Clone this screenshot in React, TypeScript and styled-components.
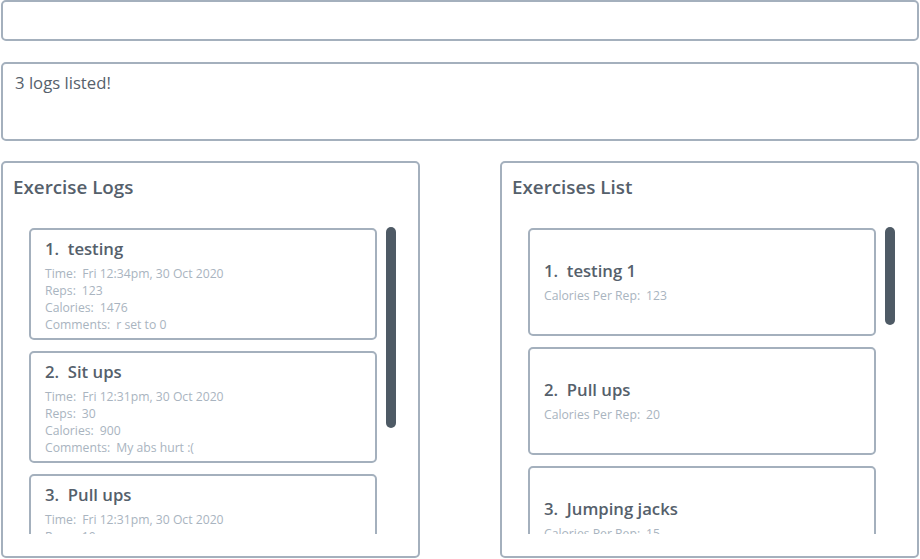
import React from 'react';
import styled, { createGlobalStyle } from 'styled-components';

const GlobalStyle = createGlobalStyle`
  html, body {
    margin: 0;
    padding: 0;
    background: #ffffff;
  }
  body {
    font-family: "Open Sans", "Noto Sans", "Liberation Sans", sans-serif;
  }
`;

const BORDER = '#a4b0bd';

const Page = styled.div`
  width: 920px;
  height: 559px;
  box-sizing: border-box;
  padding: 0 1px;
  display: flex;
  flex-direction: column;
  overflow: hidden;
`;

const CommandBox = styled.div`
  height: 41px;
  box-sizing: border-box;
  border: 2px solid ${BORDER};
  border-radius: 5px;
`;

const ResultBox = styled.div`
  margin-top: 21px;
  height: 79px;
  box-sizing: border-box;
  border: 2px solid ${BORDER};
  border-radius: 5px;
  padding: 7px 12px;
  font-size: 16.7px;
  color: #56616c;
`;

const Panels = styled.div`
  margin-top: 20px;
  display: grid;
  grid-template-columns: 419px 419px;
  justify-content: space-between;
`;

const Panel = styled.section`
  height: 397px;
  box-sizing: border-box;
  border: 2px solid ${BORDER};
  border-radius: 5px;
  padding: 11px 0 0 10px;
  display: flex;
  flex-direction: column;
`;

const PanelTitle = styled.h2`
  margin: 0;
  font-size: 18.8px;
  font-weight: 600;
  color: #55606b;
  line-height: 26px;
`;

const ListArea = styled.div`
  margin-top: 27px;
  margin-left: 16px;
  display: flex;
  gap: 9px;
  align-items: flex-start;
`;

const Viewport = styled.div`
  width: 348px;
  height: 307px;
  padding-top: 1px;
  box-sizing: border-box;
  overflow: hidden;
  display: flex;
  flex-direction: column;
  gap: 11px;
`;

const Thumb = styled.div<{ $height: number }>`
  width: 10px;
  height: ${p => p.$height}px;
  border-radius: 5px;
  background: #4e5a65;
  flex-shrink: 0;
`;

const Card = styled.div<{ $centered?: boolean }>`
  flex-shrink: 0;
  box-sizing: border-box;
  border: 2px solid ${BORDER};
  border-radius: 5px;
  height: ${p => (p.$centered ? 108 : 112)}px;
  padding: ${p => (p.$centered ? '0 14px 2px' : '7px 14px 0')};
  display: flex;
  flex-direction: column;
  justify-content: ${p => (p.$centered ? 'center' : 'flex-start')};
`;

const CardTitle = styled.div`
  font-size: 16.7px;
  font-weight: 600;
  color: #55606b;
  line-height: 24px;
  white-space: pre;
  margin-bottom: 4px;
`;

const Detail = styled.div`
  font-size: 12.2px;
  line-height: 17px;
  color: #a9b4c0;
  white-space: pre;
`;

const Label = styled.span`
  margin-right: 6px;
`;

type Log = { name: string; time: string; reps: number; calories: number; comments: string };

const logs: Log[] = [
  { name: 'testing', time: 'Fri 12:34pm, 30 Oct 2020', reps: 123, calories: 1476, comments: 'r set to 0' },
  { name: 'Sit ups', time: 'Fri 12:31pm, 30 Oct 2020', reps: 30, calories: 900, comments: 'My abs hurt :(' },
  { name: 'Pull ups', time: 'Fri 12:31pm, 30 Oct 2020', reps: 10, calories: 200, comments: 'Tired' },
];

const exercises = [
  { name: 'testing 1', calories: 123 },
  { name: 'Pull ups', calories: 20 },
  { name: 'Jumping jacks', calories: 15 },
];

const Field = ({ label, value }: { label: string; value: string | number }) => (
  <Detail>
    <Label>{label}:</Label>
    {value}
  </Detail>
);

export default function App() {
  return (
    <>
      <GlobalStyle />
      <Page>
        <CommandBox />
        <ResultBox>3 logs listed!</ResultBox>
        <Panels>
          <Panel>
            <PanelTitle>Exercise Logs</PanelTitle>
            <ListArea>
              <Viewport>
                {logs.map((log, i) => (
                  <Card key={log.name}>
                    <CardTitle>{`${i + 1}.  ${log.name}`}</CardTitle>
                    <Field label="Time" value={log.time} />
                    <Field label="Reps" value={log.reps} />
                    <Field label="Calories" value={log.calories} />
                    <Field label="Comments" value={log.comments} />
                  </Card>
                ))}
              </Viewport>
              <Thumb $height={201} />
            </ListArea>
          </Panel>
          <Panel>
            <PanelTitle>Exercises List</PanelTitle>
            <ListArea>
              <Viewport>
                {exercises.map((ex, i) => (
                  <Card key={ex.name} $centered>
                    <CardTitle>{`${i + 1}.  ${ex.name}`}</CardTitle>
                    <Field label="Calories Per Rep" value={ex.calories} />
                  </Card>
                ))}
              </Viewport>
              <Thumb $height={98} />
            </ListArea>
          </Panel>
        </Panels>
      </Page>
    </>
  );
}
